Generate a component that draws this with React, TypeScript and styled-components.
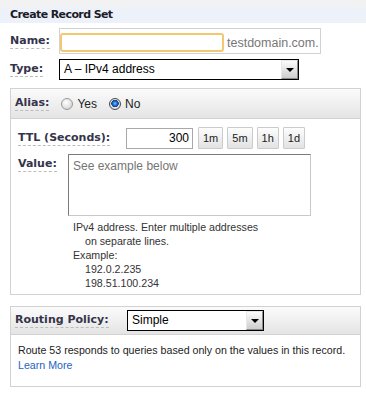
import React from "react"
import styled, { createGlobalStyle } from "styled-components"

const GlobalStyle = createGlobalStyle`
	body {
		margin: 0;
		background: #fff;
		font-family: "Liberation Sans", Arial, sans-serif;
		font-size: 11px;
		color: #222;
	}
`

const Page = styled.div`
	width: 366px;
`

const TopStrip = styled.div`
	height: 7px;
	background: #f2f2f2;
`

const Title = styled.div`
	height: 16px;
	line-height: 16px;
	padding-left: 10px;
	background: #edf2fa;
	font-family: "DejaVu Sans", Verdana, sans-serif;
	font-weight: bold;
	font-size: 11px;
	letter-spacing: -0.6px;
	color: #1c1c28;
`

const Form = styled.div`
	padding: 5px 5px 0 10px;
`

const Row = styled.div<{ $top?: number; $align?: string }>`
	display: flex;
	align-items: ${(p) => p.$align ?? "center"};
	margin-top: ${(p) => p.$top ?? 0}px;
`

const LabelCell = styled.div<{ $width: number; $pad?: number }>`
	width: ${(p) => p.$width}px;
	flex-shrink: 0;
	padding-top: ${(p) => p.$pad ?? 0}px;
`

const Label = styled.span`
	display: inline-block;
	font-family: "DejaVu Sans", Verdana, sans-serif;
	font-weight: bold;
	font-size: 11px;
	line-height: 13px;
	padding-bottom: 1px;
	color: #34344a;
	border-bottom: 1px dashed #bcbcbc;
`

const NameBox = styled.div`
	display: flex;
	align-items: center;
	border: 1px solid #d2d2d2;
	padding: 4px 1px 1px 0;
`

const NameInput = styled.input`
	box-sizing: border-box;
	width: 164px;
	height: 19px;
	border: 2px solid #f4c873;
	border-radius: 3px;
	outline: none;
	padding: 0 3px;
	margin: 0;
	font: 12px "Liberation Sans", Arial, sans-serif;
`

const Suffix = styled.span`
	margin-left: 3px;
	font-size: 12.5px;
	color: #777;
`

const SelectBox = styled.div<{ $width: number }>`
	box-sizing: border-box;
	display: flex;
	width: ${(p) => p.$width}px;
	height: 21px;
	border: 1px solid #000;
	background: #fff;
`

const SelectText = styled.div`
	flex: 1;
	padding-left: 4px;
	line-height: 19px;
	font-size: 12px;
	color: #000;
`

const DropButton = styled.div`
	box-sizing: border-box;
	width: 17px;
	height: 19px;
	display: flex;
	align-items: center;
	justify-content: center;
	background: linear-gradient(#fbfbfb, #cdcdcd);
	border: 1px solid #8a8a8a;
	border-top-color: #e8e8e8;
	border-left-color: #e8e8e8;
`

const Arrow = styled.span`
	width: 0;
	height: 0;
	border-left: 4px solid transparent;
	border-right: 4px solid transparent;
	border-top: 4px solid #000;
	margin-top: 1px;
`

const Panel = styled.div<{ $top: number }>`
	margin-top: ${(p) => p.$top}px;
	border: 1px solid #d2d2d2;
`

const PanelHeader = styled.div<{ $height: number }>`
	display: flex;
	align-items: center;
	height: ${(p) => p.$height}px;
	padding-left: 4px;
	background: linear-gradient(#fbfbfb, #e4e4e4);
	border-bottom: 1px solid #d2d2d2;
`

const RadioOption = styled.label`
	display: flex;
	align-items: center;
	margin-left: 12px;
	font-size: 12px;
	color: #222;
`

const RadioDot = styled.span<{ $checked?: boolean }>`
	box-sizing: border-box;
	width: 12px;
	height: 12px;
	border-radius: 50%;
	margin-right: 4px;
	border: 1px solid ${(p) => (p.$checked ? "#4a4a4a" : "#9a9a9a")};
	background: ${(p) =>
		p.$checked
			? "radial-gradient(circle at 50% 45%, #7fc4ff 0, #1f6fd0 2px, #0d3f8a 3.5px, #e8e8e8 4px, #c8c8c8 100%)"
			: "radial-gradient(circle at 40% 35%, #ffffff 0, #e6e6e6 50%, #c4c4c4 100%)"};
`

const PanelBody = styled.div<{ $pad: string }>`
	padding: ${(p) => p.$pad};
`

const TtlInput = styled.input`
	box-sizing: border-box;
	width: 67px;
	height: 21px;
	border: 1px solid #a8a8a8;
	outline: none;
	margin: 0;
	padding: 0 3px;
	text-align: right;
	font: 12px "Liberation Sans", Arial, sans-serif;
	color: #000;
`

const Buttons = styled.div`
	display: flex;
	gap: 4px;
	margin-left: 5px;
`

const TtlButton = styled.button`
	height: 22px;
	padding: 0 4px;
	margin: 0;
	border: 1px solid #cbcbcb;
	border-radius: 1px;
	background: linear-gradient(#fdfdfd, #e2e2e2);
	font: 11px "Liberation Sans", Arial, sans-serif;
	color: #222;
`

const ValueArea = styled.textarea`
	box-sizing: border-box;
	width: 243px;
	height: 62px;
	margin: 0;
	padding: 4px 4px;
	resize: none;
	outline: none;
	border: 1px solid #c8c8c8;
	border-top-color: #7a7a7a;
	border-left-color: #7a7a7a;
	font: 12px "Liberation Sans", Arial, sans-serif;
	::placeholder {
		color: #bdbdbd;
	}
`

const Help = styled.div`
	margin: 4px 0 0 55px;
	line-height: 14px;
	font-size: 10.65px;
	color: #333;
`

const HelpLine = styled.div<{ $indent?: boolean }>`
	padding-left: ${(p) => (p.$indent ? 12 : 0)}px;
`

const Note = styled.div`
	line-height: 15px;
	font-size: 10.65px;
	color: #222;
`

const LearnMore = styled.a`
	color: #2463c0;
	text-decoration: none;
`

const App = () => {
	return (
		<Page>
			<GlobalStyle />
			<TopStrip />
			<Title>Create Record Set</Title>
			<Form>
				<Row>
					<LabelCell $width={49}>
						<Label>Name:</Label>
					</LabelCell>
					<NameBox>
						<NameInput type="text" />
						<Suffix>testdomain.com.</Suffix>
					</NameBox>
				</Row>
				<Row $top={5}>
					<LabelCell $width={49}>
						<Label>Type:</Label>
					</LabelCell>
					<SelectBox $width={240}>
						<SelectText>A – IPv4 address</SelectText>
						<DropButton>
							<Arrow />
						</DropButton>
					</SelectBox>
				</Row>

				<Panel $top={8}>
					<PanelHeader $height={29}>
						<Label>Alias:</Label>
						<RadioOption>
							<RadioDot />
							Yes
						</RadioOption>
						<RadioOption>
							<RadioDot $checked />
							No
						</RadioOption>
					</PanelHeader>
					<PanelBody $pad="8px 0 4px 7px">
						<Row>
							<LabelCell $width={108}>
								<Label>TTL (Seconds):</Label>
							</LabelCell>
							<TtlInput type="text" defaultValue="300" />
							<Buttons>
								{["1m", "5m", "1h", "1d"].map((b) => (
									<TtlButton key={b}>{b}</TtlButton>
								))}
							</Buttons>
						</Row>
						<Row $top={5} $align="flex-start">
							<LabelCell $width={50} $pad={3}>
								<Label>Value:</Label>
							</LabelCell>
							<ValueArea placeholder="See example below" />
						</Row>
						<Help>
							<HelpLine>IPv4 address. Enter multiple addresses</HelpLine>
							<HelpLine $indent>on separate lines.</HelpLine>
							<HelpLine>Example:</HelpLine>
							<HelpLine $indent>192.0.2.235</HelpLine>
							<HelpLine $indent>198.51.100.234</HelpLine>
						</Help>
					</PanelBody>
				</Panel>

				<Panel $top={11}>
					<PanelHeader $height={27}>
						<LabelCell $width={112}>
							<Label>Routing Policy:</Label>
						</LabelCell>
						<SelectBox $width={137}>
							<SelectText>Simple</SelectText>
							<DropButton>
								<Arrow />
							</DropButton>
						</SelectBox>
					</PanelHeader>
					<PanelBody $pad="8px 0 13px 7px">
						<Note>Route 53 responds to queries based only on the values in this record.</Note>
						<Note>
							<LearnMore href="#">Learn More</LearnMore>
						</Note>
					</PanelBody>
				</Panel>
			</Form>
		</Page>
	)
}

export default App
